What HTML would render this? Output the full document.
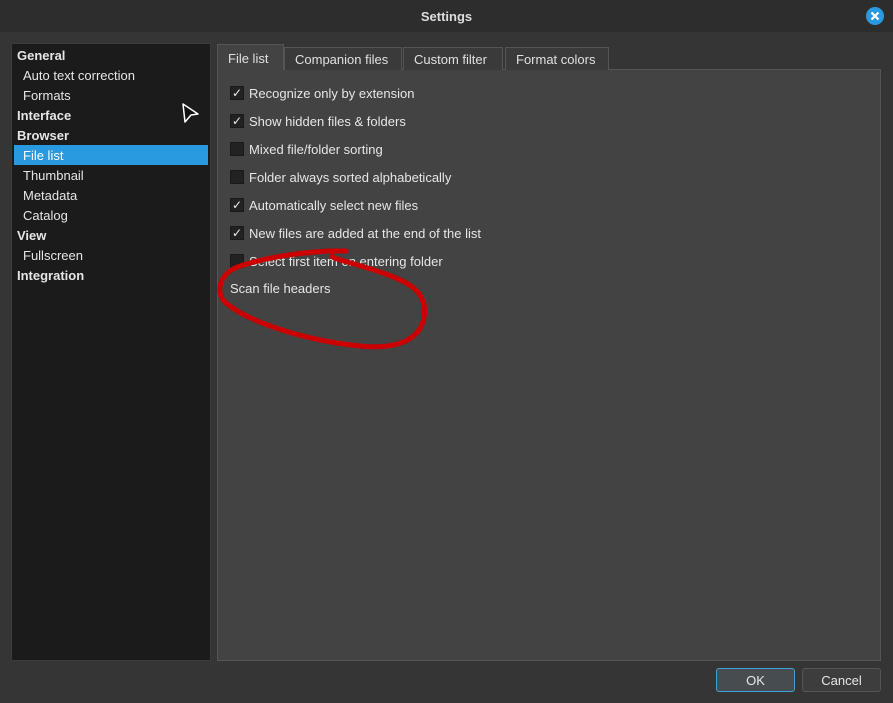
<!DOCTYPE html>
<html><head><style>
*{margin:0;padding:0;box-sizing:border-box}
body{width:893px;height:703px;background:#353535;font-family:"Liberation Sans","DejaVu Sans",sans-serif;font-size:13px;color:#e6e6e6;position:relative;overflow:hidden}
.title{position:absolute;left:0;top:0;width:893px;height:32px;background:#2d2d2d;text-align:center;line-height:33px;font-weight:bold;color:#ddd;font-size:13px}
.close{position:absolute;left:866px;top:7px;width:18px;height:18px;border-radius:50%;background:#2a9ae0}
.left{position:absolute;left:11px;top:43px;width:200px;height:618px;background:#1b1b1b;border:1px solid #3c3c3c}
.left div{height:20px;line-height:21px;padding-left:6px}
.left .b{font-weight:bold;padding-left:5px}
.left .s{padding-left:11px}
.left .sel{background:#2a9ae0;margin:0 2px;padding-left:9px;color:#fff}
.right{position:absolute;left:217px;top:69px;width:664px;height:592px;background:#434343;border:1px solid #555}
.tab{position:absolute;top:47px;height:23px;line-height:23px;background:#3a3a3a;border:1px solid #555;border-bottom:none;padding:0 10px;color:#e0e0e0}
.tab.a{top:44px;height:26px;background:#434343;line-height:27px}
.cb{position:absolute;left:230px;width:14px;height:14px;background:#222;border:1px solid #1a1a1a;color:#eee;font-size:12px;line-height:13px;text-align:center}
.lb{position:absolute;left:249px;height:16px;line-height:18px}
.btn{position:absolute;top:668px;height:24px;width:79px;border:1px solid #555;border-radius:3px;background:#3d3d3d;text-align:center;line-height:24px}
</style></head><body>
<div class="title">Settings</div>
<div class="close"><svg width="18" height="18"><path d="M5.5 5.5L12.5 12.5M12.5 5.5L5.5 12.5" stroke="#fff" stroke-width="2.2"/></svg></div>
<div class="left">
<div class="b" style="margin-top:1px">General</div>
<div class="s">Auto text correction</div>
<div class="s">Formats</div>
<div class="b">Interface</div>
<div class="b">Browser</div>
<div class="sel">File list</div>
<div class="s">Thumbnail</div>
<div class="s">Metadata</div>
<div class="s">Catalog</div>
<div class="b">View</div>
<div class="s">Fullscreen</div>
<div class="b">Integration</div>
</div>
<svg style="position:absolute;left:181px;top:102px" width="20" height="22"><path d="M2 2L17 12L10 13L4 20Z" fill="#111" stroke="#fff" stroke-width="1.5" stroke-linejoin="round"/></svg>
<div class="right"></div>
<div class="tab a" style="left:217px;width:67px">File list</div>
<div class="tab" style="left:284px;width:118px">Companion files</div>
<div class="tab" style="left:403px;width:100px">Custom filter</div>
<div class="tab" style="left:505px;width:104px">Format colors</div>
<div class="cb" style="top:86px">✓</div><div class="lb" style="top:85px">Recognize only by extension</div>
<div class="cb" style="top:114px">✓</div><div class="lb" style="top:113px">Show hidden files &amp; folders</div>
<div class="cb" style="top:142px"></div><div class="lb" style="top:141px">Mixed file/folder sorting</div>
<div class="cb" style="top:170px"></div><div class="lb" style="top:169px">Folder always sorted alphabetically</div>
<div class="cb" style="top:198px">✓</div><div class="lb" style="top:197px">Automatically select new files</div>
<div class="cb" style="top:226px">✓</div><div class="lb" style="top:225px">New files are added at the end of the list</div>
<div class="cb" style="top:254px"></div><div class="lb" style="top:253px">Select first item on entering folder</div>
<div class="lb" style="left:230px;top:280px">Scan file headers</div>
<svg style="position:absolute;left:0;top:0" width="893" height="703"><path d="M346 251C310 250 260 258 235 268C220 275 215 292 225 302C245 320 300 340 360 346C400 350 420 338 424 318C428 292 410 282 380 272C350 262 330 258 332 256" fill="none" stroke="#c00" stroke-width="5" stroke-linecap="round"/></svg>
<div class="btn" style="left:716px;border-color:#3aa0e0;background:#474c50">OK</div>
<div class="btn" style="left:802px">Cancel</div>
</body></html>
